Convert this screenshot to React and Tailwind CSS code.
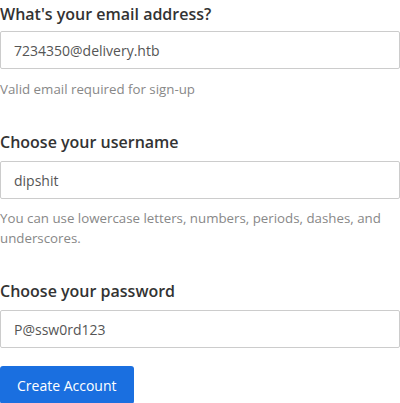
export default function App() {
  return (
    <div className="w-[400px] bg-white font-['Open_Sans',sans-serif] text-[#333]">
      <form className="flex flex-col" onSubmit={(e) => e.preventDefault()}>
        {/* Email */}
        <label className="text-[16px] font-semibold leading-[22px] pt-[3px]">What's your email address?</label>
        <input
          type="text"
          defaultValue="7234350@delivery.htb"
          className="mt-[6px] h-[38px] w-full rounded-[2px] border border-[#ccc] px-[13px] text-[14px] text-[#555] outline-none"
        />
        <p className="mt-[10px] text-[13.3px] leading-[20px] text-[#888]">Valid email required for sign-up</p>

        {/* Username */}
        <label className="mt-[32px] text-[16px] font-semibold leading-[22px]">Choose your username</label>
        <input
          type="text"
          defaultValue="dipshit"
          className="mt-[8px] h-[38px] w-full rounded-[2px] border border-[#ccc] px-[13px] text-[14px] text-[#555] outline-none"
        />
        <p className="mt-[9px] text-[13.3px] leading-[20px] text-[#888]">
          You can use lowercase letters, numbers, periods, dashes, and underscores.
        </p>

        {/* Password */}
        <label className="mt-[32px] text-[16px] font-semibold leading-[22px]">Choose your password</label>
        <input
          type="text"
          defaultValue="P@ssw0rd123"
          className="mt-[8px] h-[38px] w-full rounded-[2px] border border-[#ccc] px-[13px] text-[14px] text-[#555] outline-none"
        />

        <div className="mt-[18px]">
          <button
            type="submit"
            className="h-[38px] rounded-[3px] bg-[#1a6fe0] px-[17px] text-[14px] font-medium text-white"
          >
            Create Account
          </button>
        </div>
      </form>
    </div>
  );
}
